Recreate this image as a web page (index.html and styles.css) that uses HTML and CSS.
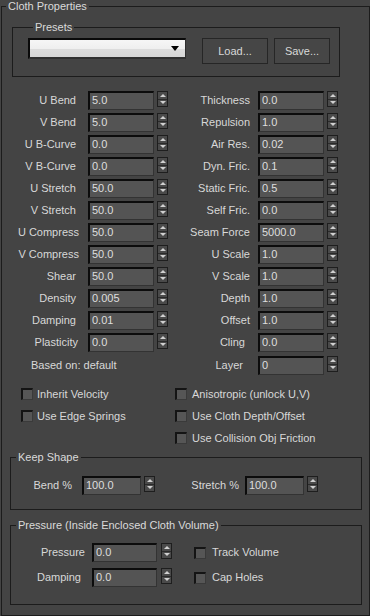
FILE: index.html
```html
<!DOCTYPE html>
<html lang="en">

<head>
  <meta charset="UTF-8" />
  <meta name="viewport" content="width=device-width, initial-scale=1.0" />
  <title>Cloth Properties</title>
  <link rel="stylesheet" href="styles.css">
</head>

<body>
  <fieldset class="group main">
    <legend>Cloth Properties</legend>

    <fieldset class="group presets">
      <legend>Presets</legend>
      <div class="presets-row">
        <div class="dropdown"><span class="arrow"></span></div>
        <button class="btn load">Load...</button>
        <button class="btn save">Save...</button>
      </div>
    </fieldset>

    <div class="params">
      <div class="col left">
        <div class="row"><label>U Bend</label><span class="field">5.0</span><span class="spin"><i></i><i></i></span></div>
        <div class="row"><label>V Bend</label><span class="field">5.0</span><span class="spin"><i></i><i></i></span></div>
        <div class="row"><label>U B-Curve</label><span class="field">0.0</span><span class="spin"><i></i><i></i></span></div>
        <div class="row"><label>V B-Curve</label><span class="field">0.0</span><span class="spin"><i></i><i></i></span></div>
        <div class="row"><label>U Stretch</label><span class="field">50.0</span><span class="spin"><i></i><i></i></span></div>
        <div class="row"><label>V Stretch</label><span class="field">50.0</span><span class="spin"><i></i><i></i></span></div>
        <div class="row"><label class="wide">U Compress</label><span class="field">50.0</span><span class="spin"><i></i><i></i></span></div>
        <div class="row"><label class="wide">V Compress</label><span class="field">50.0</span><span class="spin"><i></i><i></i></span></div>
        <div class="row"><label>Shear</label><span class="field">50.0</span><span class="spin"><i></i><i></i></span></div>
        <div class="row"><label>Density</label><span class="field">0.005</span><span class="spin"><i></i><i></i></span></div>
        <div class="row"><label>Damping</label><span class="field">0.01</span><span class="spin"><i></i><i></i></span></div>
        <div class="row"><label class="mid">Plasticity</label><span class="field">0.0</span><span class="spin"><i></i><i></i></span></div>
        <div class="row last"><span class="based">Based on: default</span></div>
      </div>
      <div class="col right">
        <div class="row"><label>Thickness</label><span class="field">0.0</span><span class="spin"><i></i><i></i></span></div>
        <div class="row"><label>Repulsion</label><span class="field">1.0</span><span class="spin"><i></i><i></i></span></div>
        <div class="row"><label>Air Res.</label><span class="field">0.02</span><span class="spin"><i></i><i></i></span></div>
        <div class="row"><label>Dyn. Fric.</label><span class="field">0.1</span><span class="spin"><i></i><i></i></span></div>
        <div class="row"><label>Static Fric.</label><span class="field">0.5</span><span class="spin"><i></i><i></i></span></div>
        <div class="row"><label>Self Fric.</label><span class="field">0.0</span><span class="spin"><i></i><i></i></span></div>
        <div class="row"><label>Seam Force</label><span class="field">5000.0</span><span class="spin"><i></i><i></i></span></div>
        <div class="row"><label>U Scale</label><span class="field">1.0</span><span class="spin"><i></i><i></i></span></div>
        <div class="row"><label>V Scale</label><span class="field">1.0</span><span class="spin"><i></i><i></i></span></div>
        <div class="row"><label>Depth</label><span class="field">1.0</span><span class="spin"><i></i><i></i></span></div>
        <div class="row"><label>Offset</label><span class="field">1.0</span><span class="spin"><i></i><i></i></span></div>
        <div class="row"><label class="cling">Cling</label><span class="field">0.0</span><span class="spin"><i></i><i></i></span></div>
        <div class="row last"><label class="layer">Layer</label><span class="field">0</span><span class="spin"><i></i><i></i></span></div>
      </div>
    </div>

    <div class="checks">
      <div class="check-col first">
        <div class="check"><span class="box"></span>Inherit Velocity</div>
        <div class="check"><span class="box"></span>Use Edge Springs</div>
      </div>
      <div class="check-col">
        <div class="check"><span class="box"></span>Anisotropic (unlock U,V)</div>
        <div class="check"><span class="box"></span>Use Cloth Depth/Offset</div>
        <div class="check"><span class="box"></span>Use Collision Obj Friction</div>
      </div>
    </div>

    <fieldset class="group sub keep">
      <legend>Keep Shape</legend>
      <div class="keep-row">
        <label class="bend">Bend %</label><span class="field">100.0</span><span class="spin"><i></i><i></i></span>
        <label class="stretch">Stretch %</label><span class="field">100.0</span><span class="spin"><i></i><i></i></span>
      </div>
    </fieldset>

    <fieldset class="group sub pressure">
      <legend>Pressure (Inside Enclosed Cloth Volume)</legend>
      <div class="p-row">
        <label>Pressure</label><span class="field">0.0</span><span class="spin"><i></i><i></i></span>
        <div class="check"><span class="box"></span>Track Volume</div>
      </div>
      <div class="p-row">
        <label class="damp">Damping</label><span class="field">0.0</span><span class="spin"><i></i><i></i></span>
        <div class="check"><span class="box"></span>Cap Holes</div>
      </div>
    </fieldset>
  </fieldset>
</body>

</html>
```

FILE: styles.css
```css
* {
  box-sizing: border-box;
}

body {
  margin: 0;
  background: #444444;
  color: #d8d8d8;
  font-family: "Liberation Sans", Arial, sans-serif;
  font-size: 11px;
  line-height: 13px;
}

.group {
  margin: 0;
  padding: 0;
  min-width: 0;
  border: 1px solid #1c1c1c;
}

.group legend {
  padding: 0 2px;
  margin-left: 4px;
  line-height: 13px;
  color: #dadada;
}

.main {
  margin-left: 1px;
  width: 369px;
  padding-bottom: 10px;
}

.presets {
  margin: 8px 0 0 10px;
  width: 328px;
  padding: 4px 0 12px 15px;
}

.presets legend {
  margin-left: 5px;
}

.presets-row {
  display: flex;
  align-items: flex-start;
}

.dropdown {
  width: 158px;
  height: 21px;
  border-style: solid;
  border-width: 2px 1px 2px 2px;
  border-color: #0a0a0a #2e2e2e #303030 #0a0a0a;
  background: linear-gradient(#f6f6f6, #efefef 50%, #dddddd 50%, #d6d6d6);
  display: flex;
  justify-content: flex-end;
  align-items: center;
  padding-right: 6px;
}

.dropdown .arrow {
  width: 0;
  height: 0;
  border-left: 4px solid transparent;
  border-right: 4px solid transparent;
  border-top: 5px solid #000;
}

.btn {
  appearance: none;
  height: 26px;
  margin: 0;
  padding: 0;
  border: 1px solid #262626;
  background: #464646;
  color: #d8d8d8;
  font: inherit;
}

.btn.load {
  width: 66px;
  margin-left: 16px;
}

.btn.save {
  width: 56px;
  margin-left: 6px;
}

.params {
  display: flex;
  margin-top: 14px;
}

.row {
  display: flex;
  align-items: flex-start;
  height: 19px;
  margin-bottom: 3px;
}

.row.last {
  margin-top: 4px;
  margin-bottom: 0;
}

.row label {
  flex-shrink: 0;
  line-height: 19px;
  text-align: right;
}

.left .row label {
  width: 77px;
  padding-right: 3px;
  margin-right: 9px;
}

.left .row label.wide {
  padding-right: 0;
}

.left .row label.mid {
  padding-right: 1px;
}

.right .row label {
  width: 82px;
  margin-right: 8px;
}

.right .row label.cling {
  padding-right: 5px;
}

.right .row label.layer {
  padding-right: 7px;
}

.based {
  line-height: 19px;
  padding-left: 29px;
}

.field {
  display: block;
  flex-shrink: 0;
  width: 66px;
  height: 19px;
  border-style: solid;
  border-width: 2px 1px 1px 2px;
  border-color: #0c0c0c #333333 #333333 #0c0c0c;
  background: #545454;
  color: #dedede;
  padding-left: 2px;
  line-height: 14px;
}

.spin {
  display: flex;
  flex-direction: column;
  flex-shrink: 0;
  width: 11px;
  height: 16px;
  margin-left: 3px;
  border: 1px solid #1e1e1e;
  background: #4a4a4a;
}

.spin i {
  flex: 1;
  display: flex;
  align-items: center;
  justify-content: center;
}

.spin i:first-child {
  border-bottom: 1px solid #2a2a2a;
}

.spin i:first-child::after {
  content: "";
  border-left: 3px solid transparent;
  border-right: 3px solid transparent;
  border-bottom: 3px solid #d0d0d0;
}

.spin i:last-child::after {
  content: "";
  border-left: 3px solid transparent;
  border-right: 3px solid transparent;
  border-top: 3px solid #d0d0d0;
}

.checks {
  display: flex;
  margin-top: 13px;
  padding-left: 19px;
}

.check-col.first {
  width: 154px;
}

.check {
  display: flex;
  align-items: center;
  height: 12px;
  margin-bottom: 10px;
  white-space: nowrap;
}

.box {
  flex-shrink: 0;
  width: 12px;
  height: 12px;
  margin-right: 4px;
  border-style: solid;
  border-width: 2px 1px 1px 2px;
  border-color: #141414 #3a3a3a #3a3a3a #141414;
  background: #565656;
}

.check-col + .check-col .box {
  margin-right: 5px;
}

.sub {
  width: 352px;
  margin-left: 8px;
}

.sub legend {
  margin-left: 5px;
}

.keep {
  margin-top: -3px;
  padding: 12px 0 14px 0;
}

.keep-row {
  display: flex;
  align-items: flex-start;
}

.keep-row label {
  flex-shrink: 0;
  line-height: 19px;
  text-align: right;
}

.keep-row label.bend {
  width: 61px;
  margin-right: 10px;
}

.keep-row label.stretch {
  width: 84px;
  margin-right: 6px;
}

.keep-row .field {
  width: 59px;
}

.pressure {
  margin-top: 9px;
  padding: 11px 0 17px 0;
}

.p-row {
  display: flex;
  align-items: flex-start;
  margin-bottom: 6px;
}

.p-row:last-child {
  margin-bottom: 0;
}

.p-row label {
  flex-shrink: 0;
  width: 74px;
  margin-right: 7px;
  line-height: 19px;
  text-align: right;
}

.p-row label.damp {
  padding-right: 4px;
}

.p-row .field {
  width: 65px;
}

.p-row .spin {
  margin-left: 4px;
}

.p-row .check {
  height: 19px;
  margin: 0 0 0 22px;
}

.p-row .box {
  margin-right: 6px;
}
```
